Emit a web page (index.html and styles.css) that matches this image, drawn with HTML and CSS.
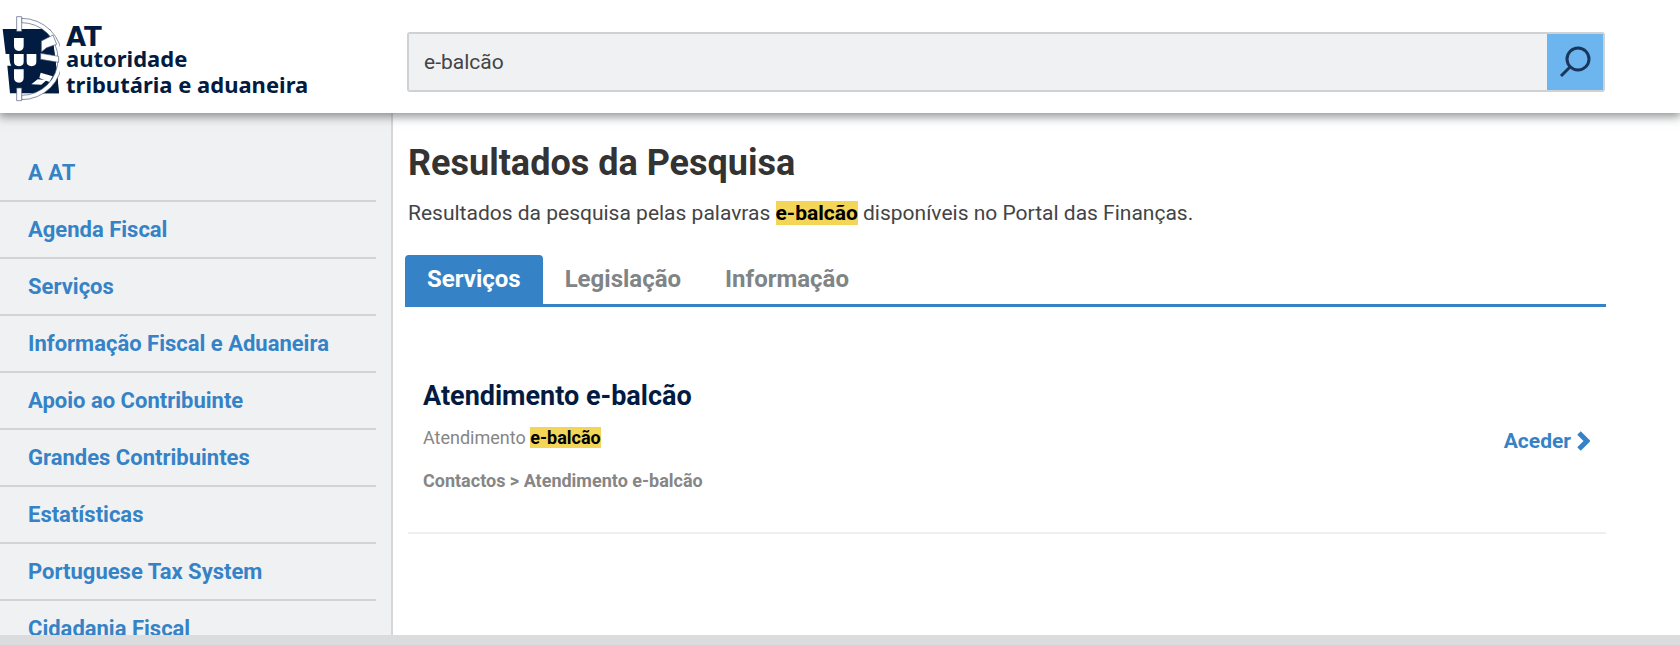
FILE: index.html
```html
<!DOCTYPE html>
<html lang="pt">
<head>
    <meta charset="UTF-8">
    <title>Portal das Finanças - Pesquisa</title>
    <link rel="stylesheet" href="styles.css">
</head>
<body>
<header class="header">
    <a class="logo" href="#" aria-label="AT autoridade tributária e aduaneira">
        <svg class="logo-mark" viewBox="0 45 180 261" aria-hidden="true">
            <path class="navy" d="M8 87H161L177 280H30L22 197H34Q28 190 28 162H17Z"/>
            <!-- armillary sphere -->
            <path class="white" d="M136 87H180V272H176L172 225L160 130Z"/>
            <path class="navy" d="M120 94L150 87L158 118L172 225L177 280H100Z"/>
            <path class="band" d="M65 55A120 120 0 0 1 65 299V286A107 107 0 0 0 65 68Z"/>
            <path class="band" d="M50 50H65V94H50ZM50 264H65V302H50Z"/>
            <path class="band" d="M124 123L159 105L170 133L140 143L124 156Z"/>
            <path class="band" d="M122 160L176 169V187L122 178Z"/>
            <path class="white" d="M122 218L158 229L148 246L118 234Z"/>
            <path class="white" d="M113 238L140 240L124 254L94 253Z"/>
            <!-- shields -->
            <path class="white" d="M42 114H71V138Q71 151 57 153Q42 151 42 138ZM42 162H71V186Q71 197 57 199Q42 197 42 186ZM80 162H109V186Q109 197 95 199Q80 197 80 186ZM42 208H71V233Q71 246 57 248Q42 246 42 233Z"/>
        </svg>
        <span class="logo-text">
            <strong class="logo-at">AT</strong>
            <span class="logo-line">autoridade</span>
            <span class="logo-line">tributária e aduaneira</span>
        </span>
    </a>
    <form class="search" role="search">
        <input class="search-input" type="text" aria-label="Pesquisar" value="e-balcão">
        <button class="search-button" type="submit" aria-label="Pesquisar">
            <svg class="search-icon" viewBox="0 0 32 32" aria-hidden="true">
                <circle cx="19" cy="13" r="11"/>
                <path d="M11 21L2 30"/>
            </svg>
        </button>
    </form>
</header>

<div class="page">
    <nav class="sidebar">
        <ul class="menu">
            <li><a href="#">A AT</a></li>
            <li><a href="#">Agenda Fiscal</a></li>
            <li><a href="#">Serviços</a></li>
            <li><a href="#">Informação Fiscal e Aduaneira</a></li>
            <li><a href="#">Apoio ao Contribuinte</a></li>
            <li><a href="#">Grandes Contribuintes</a></li>
            <li><a href="#">Estatísticas</a></li>
            <li><a href="#">Portuguese Tax System</a></li>
            <li><a href="#">Cidadania Fiscal</a></li>
        </ul>
    </nav>

    <main class="content">
        <h1>Resultados da Pesquisa</h1>
        <p class="intro">Resultados da pesquisa pelas palavras <mark>e-balcão</mark> disponíveis no Portal das Finanças.</p>

        <div class="tabs" role="tablist">
            <button class="tab active" type="button" role="tab" aria-selected="true">Serviços</button>
            <button class="tab" type="button" role="tab" aria-selected="false">Legislação</button>
            <button class="tab" type="button" role="tab" aria-selected="false">Informação</button>
        </div>

        <article class="result">
            <div class="result-body">
                <h2>Atendimento e-balcão</h2>
                <p class="summary">Atendimento <mark>e-balcão</mark></p>
                <p class="path">Contactos &gt; Atendimento e-balcão</p>
            </div>
            <a class="access" href="#">Aceder
                <svg class="chevron" viewBox="0 0 13 20" aria-hidden="true"><path d="M2 2L10 10L2 18"/></svg>
            </a>
        </article>
    </main>
</div>
<div class="bottom-bar"></div>
</body>
</html>
```
FILE: styles.css
```css
* {
    box-sizing: border-box;
}
body {
    display: flex;
    flex-direction: column;
    height: 100vh;
    margin: 0;
    font-family: Roboto, "Liberation Sans", sans-serif;
    color: #333;
    background: #fff;
    overflow: hidden;
}
a {
    color: #3583c6;
    text-decoration: none;
}
h1, h2, p {
    margin: 0;
}
mark {
    background: #f3d558;
    color: #000;
    font-weight: 700;
}

/* header */
.header {
    position: relative;
    z-index: 1;
    display: flex;
    flex: none;
    padding: 15px 75px 11px 0;
    background: #fff;
    box-shadow: 0 3px 9px 1px rgba(60, 66, 68, 0.55);
}
.logo {
    display: flex;
    flex: 0 0 407px;
    color: #021b41;
}
.logo-mark {
    width: 60px;
    height: 87px;
}
.navy {
    fill: #021b41;
}
.white {
    fill: #fff;
}
.band {
    fill: #fff;
    stroke: #4a5c7c;
    stroke-width: 2;
}
.logo-text {
    display: flex;
    flex-direction: column;
    padding: 14px 0 0 6px;
    font-family: "Noto Sans", "Open Sans", sans-serif;
    font-size: 22px;
    font-weight: 700;
    line-height: 26px;
    white-space: nowrap;
}
.logo-at {
    font-family: "DejaVu Sans", sans-serif;
    font-size: 26px;
    line-height: 16px;
}
.search {
    display: flex;
    flex: 1;
    height: 60px;
    margin-top: 17px;
    border: 2px solid #cfd1d2;
    border-radius: 3px;
}
.search-input {
    flex: 1;
    min-width: 0;
    padding: 0 15px;
    border: 0;
    background: #f0f1f3;
    color: #444;
    font: 21px Roboto, sans-serif;
    outline: none;
}
.search-button {
    display: flex;
    align-items: center;
    justify-content: center;
    width: 56px;
    padding: 0;
    border: 0;
    background: #6cb5ee;
    cursor: pointer;
}
.search-icon {
    width: 32px;
    height: 32px;
    fill: none;
    stroke: #1b365d;
    stroke-width: 3;
}

/* page */
.page {
    display: flex;
    flex: 1;
    min-height: 0;
}
.sidebar {
    flex: 0 0 393px;
    padding: 32px 15px 0 0;
    border-right: 2px solid #d4d6d9;
    background: #f0f1f3;
    overflow: hidden;
}
.menu {
    margin: 0;
    padding: 0;
    list-style: none;
}
.menu li {
    border-bottom: 2px solid #d1d3d5;
}
.menu a {
    display: block;
    padding: 0 28px;
    font-size: 22px;
    font-weight: 700;
    line-height: 55px;
}
.content {
    flex: 1;
    padding: 28px 74px 0 15px;
}
h1 {
    font-size: 36px;
    font-weight: 700;
    line-height: 44px;
}
.intro {
    margin-top: 14px;
    color: #444;
    font-size: 21px;
    line-height: 28px;
}
.tabs {
    display: flex;
    margin: 28px 0 0 -3px;
    border-bottom: 3px solid #3583c6;
}
.tab {
    padding: 0 22px;
    border: 0;
    border-radius: 4px 4px 0 0;
    background: none;
    color: #7f8486;
    font: 700 24px/49px Roboto, sans-serif;
    cursor: pointer;
}
.tab.active {
    background: #3583c6;
    color: #fff;
}
.result {
    display: flex;
    align-items: center;
    justify-content: space-between;
    margin-top: 73px;
    padding: 0 16px 40px 15px;
    border-bottom: 2px solid #efefef;
}
h2 {
    color: #021b41;
    font-size: 27px;
    font-weight: 700;
    line-height: 32px;
}
.summary {
    margin-top: 15px;
    color: #868686;
    font-size: 18px;
    line-height: 22px;
}
.path {
    margin-top: 21px;
    color: #868686;
    font-size: 18px;
    font-weight: 700;
    line-height: 22px;
}
.access {
    display: flex;
    align-items: center;
    gap: 6px;
    padding-top: 10px;
    font-size: 21px;
    font-weight: 700;
}
.chevron {
    width: 13px;
    height: 20px;
    fill: none;
    stroke: #3583c6;
    stroke-width: 5;
}
.bottom-bar {
    flex: none;
    height: 10px;
    background: #dadcde;
}
```
